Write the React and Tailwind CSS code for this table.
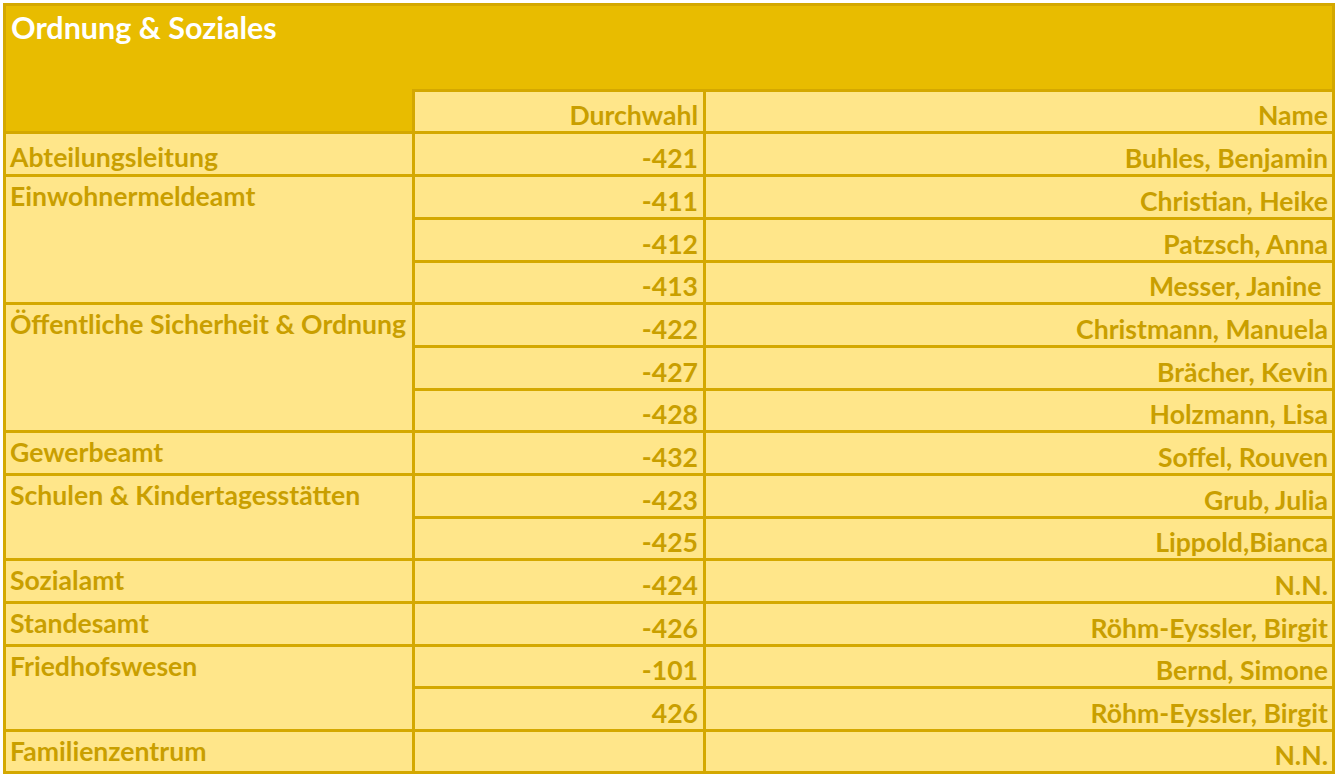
import React from "react";

const groups = [
  { label: "Abteilungsleitung", top: true, rows: [["-421", "Buhles, Benjamin"]] },
  {
    label: "Einwohnermeldeamt",
    rows: [
      ["-411", "Christian, Heike"],
      ["-412", "Patzsch, Anna"],
      ["-413", "Messer, Janine\u00a0"],
    ],
  },
  {
    label: "Öffentliche Sicherheit & Ordnung",
    rows: [
      ["-422", "Christmann, Manuela"],
      ["-427", "Brächer, Kevin"],
      ["-428", "Holzmann, Lisa"],
    ],
  },
  { label: "Gewerbeamt", rows: [["-432", "Soffel, Rouven"]] },
  {
    label: "Schulen & Kindertagesstätten",
    rows: [
      ["-423", "Grub, Julia"],
      ["-425", "Lippold,Bianca"],
    ],
  },
  { label: "Sozialamt", rows: [["-424", "N.N."]] },
  { label: "Standesamt", rows: [["-426", "Röhm-Eyssler, Birgit"]] },
  {
    label: "Friedhofswesen",
    rows: [
      ["-101", "Bernd, Simone"],
      ["426", "Röhm-Eyssler, Birgit"],
    ],
  },
  { label: "Familienzentrum", rows: [["", "N.N."]] },
];

const spans = {
  1: "row-span-1",
  2: "row-span-2",
  3: "row-span-3",
};

function App() {
  return (
    <div className="min-h-screen bg-white pt-[3px] pl-[3px] font-['Lato','Liberation_Sans',sans-serif] font-bold">
      <div className="w-[1332px] border-[3px] border-[#d4a800] bg-[#e8bc00]">
        <div className="grid grid-cols-[406px_291px_629px] grid-rows-[83px_42px_43px_43px_43px_42px_43px_43px_42px_43px_43px_42px_43px_43px_42px_43px_42px] text-[26.6px] leading-[32px] text-[#c99f00]">
          {/* title */}
          <div className="col-span-3 pl-[5px] pt-[3px] text-[30.5px] leading-[37px] text-white">
            Ordnung &amp; Soziales
          </div>

          {/* header */}
          <div className="bg-[#e8bc00]" />
          <div className="flex items-end justify-end border-l-[3px] border-t-[3px] border-[#d4a800] bg-[#ffe68a] pb-0 pr-[5px]">
            Durchwahl
          </div>
          <div className="flex items-end justify-end border-l-[3px] border-t-[3px] border-[#d4a800] bg-[#ffe68a] pb-0 pr-[4px]">
            Name
          </div>

          {groups.map((g) => (
            <React.Fragment key={g.label}>
              <div
                className={`${spans[g.rows.length]} border-t-[3px] border-[#d4a800] bg-[#ffe68a] pl-[4px] ${
                  g.top ? "pt-[7px]" : "pt-[3px]"
                } whitespace-nowrap`}
                style={{ gridColumn: 1 }}
              >
                {g.label}
              </div>
              {g.rows.map(([ext, name], i) => (
                <React.Fragment key={i}>
                  <div
                    className="flex items-end justify-end border-l-[3px] border-t-[3px] border-[#d4a800] bg-[#ffe68a] pb-0 pr-[5px]"
                    style={{ gridColumn: 2 }}
                  >
                    {ext}
                  </div>
                  <div
                    className="flex items-end justify-end whitespace-pre border-l-[3px] border-t-[3px] border-[#d4a800] bg-[#ffe68a] pb-0 pr-[4px]"
                    style={{ gridColumn: 3 }}
                  >
                    {name}
                  </div>
                </React.Fragment>
              ))}
            </React.Fragment>
          ))}
        </div>
      </div>
    </div>
  );
}

export default App;
